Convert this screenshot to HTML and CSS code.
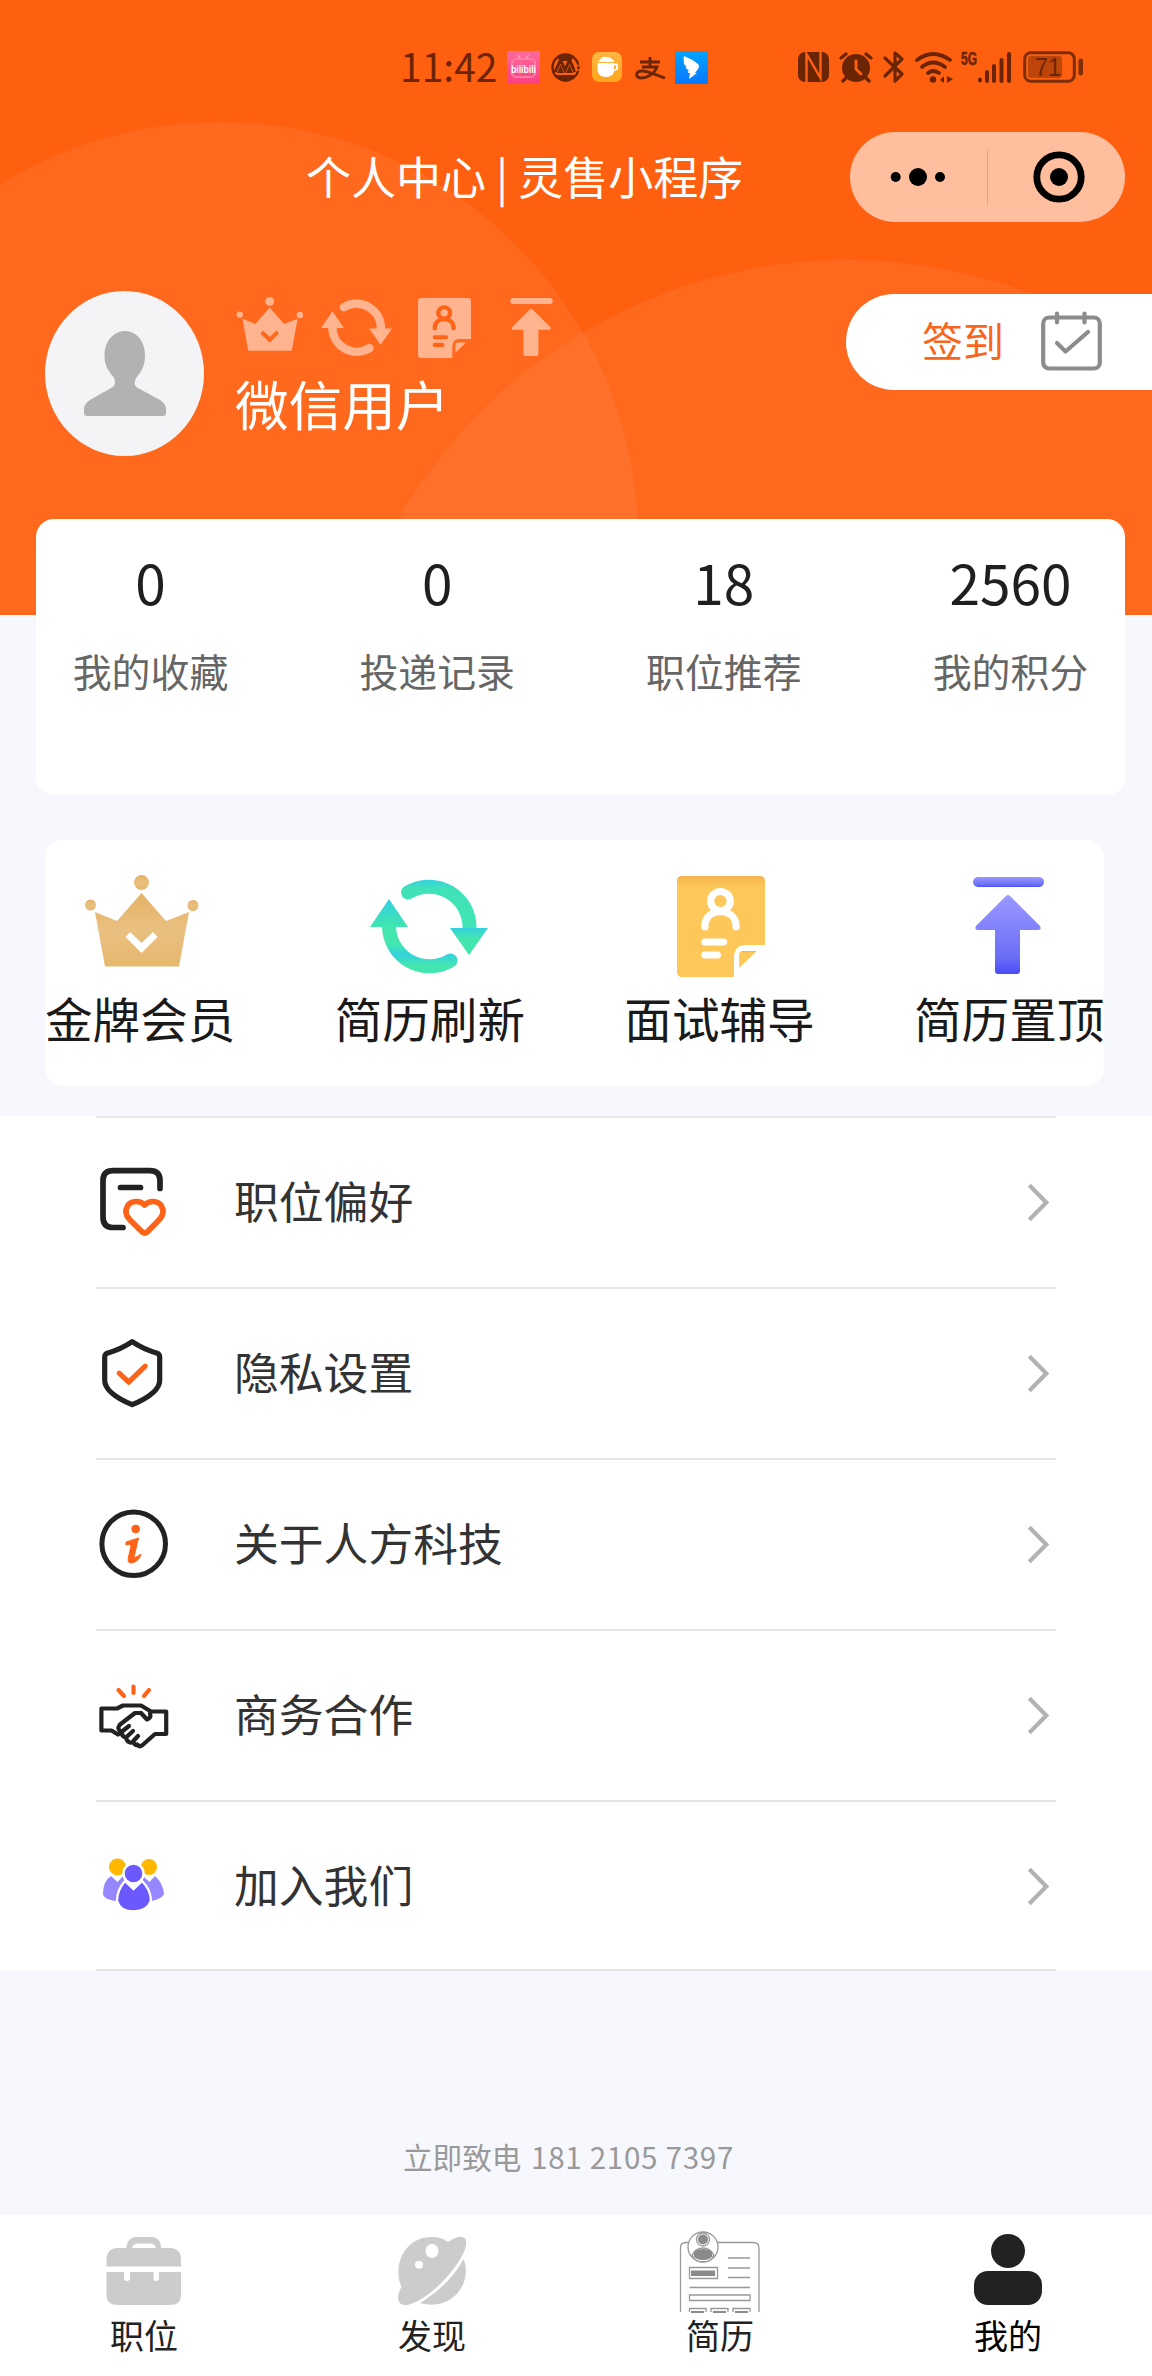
FILE: index.html
```html
<!DOCTYPE html>
<html lang="zh-CN">
<head>
<meta charset="utf-8">
<title>个人中心</title>
<link rel="stylesheet" href="styles.css">
</head>
<body>
<svg class="defs" width="0" height="0" aria-hidden="true">
  <defs>
    <linearGradient id="goldFill" x1="0" y1="0" x2="0" y2="1"><stop offset="0" stop-color="#e3b265"/><stop offset=".5" stop-color="#eac080"/><stop offset="1" stop-color="#e6b86f"/></linearGradient>
    <linearGradient id="mintFill" gradientUnits="userSpaceOnUse" x1="0" y1="0" x2="0" y2="96"><stop offset="0" stop-color="#30cdea"/><stop offset=".22" stop-color="#34d0e0"/><stop offset=".5" stop-color="#42e6ae"/><stop offset=".51" stop-color="#34d0e0"/><stop offset=".62" stop-color="#42e6ae"/></linearGradient>
    <linearGradient id="mintTop" gradientUnits="userSpaceOnUse" x1="0" y1="0" x2="0" y2="96"><stop offset="0" stop-color="#34d0e4"/><stop offset=".1" stop-color="#40e2b8"/><stop offset="1" stop-color="#42e6ae"/></linearGradient>
    <linearGradient id="mintBottom" gradientUnits="userSpaceOnUse" x1="0" y1="0" x2="0" y2="96"><stop offset="0" stop-color="#42e6ae"/><stop offset=".68" stop-color="#42e6ae"/><stop offset=".79" stop-color="#36d2de"/><stop offset=".9" stop-color="#42e6ae"/></linearGradient>
    <linearGradient id="violetFill" x1="0" y1="0" x2="0" y2="1"><stop offset="0" stop-color="#9a99ff"/><stop offset=".8" stop-color="#6b6cf6"/><stop offset="1" stop-color="#474cf8"/></linearGradient>
    <linearGradient id="amberFill" x1="0" y1="0" x2="0" y2="1"><stop offset="0" stop-color="#f3b14e"/><stop offset=".1" stop-color="#fdc75a"/><stop offset="1" stop-color="#fdc75a"/></linearGradient>
    <linearGradient id="pinkFill" x1="0" y1="0" x2="0" y2="1"><stop offset="0" stop-color="#ff6a9c"/><stop offset="1" stop-color="#fd3f80"/></linearGradient>
    <linearGradient id="cupFill" x1="0" y1="0" x2="0" y2="1"><stop offset="0" stop-color="#ffb640"/><stop offset="1" stop-color="#ffa51c"/></linearGradient>
    <linearGradient id="blueFill" x1="0" y1="0" x2="0" y2="1"><stop offset="0" stop-color="#00a3ff"/><stop offset="1" stop-color="#0a78ff"/></linearGradient>
    <symbol id="crown" viewBox="0 0 114 92">
      <circle cx="56.500" cy="7.500" r="7.500"/><circle cx="5.500" cy="30" r="5.500"/><circle cx="108" cy="30.500" r="5.500"/>
      <path fill-rule="evenodd" d="M10 37 32 46 56.500 18 81 46 104 37 94 91.500H20ZM40.500 62 56.500 78 72.500 62 68 57 56.500 68 45 57Z"/>
    </symbol>
    <symbol id="refresh" viewBox="0 0 118 96">
      <path class="arc arc-top" d="M38 13.500A40.500 40.500 0 0 1 99.500 48V54"/>
      <path class="arc arc-bottom" d="M80.500 81.500A40.500 40.500 0 0 1 19 47V40"/>
      <path d="M0 48 19 20 38 48ZM80 49H118L99 76Z"/>
    </symbol>
    <symbol id="note" viewBox="0 0 85 101" preserveAspectRatio="none">
      <path d="M5 0H80Q85 0 85 5V69H67Q55 69 55 82V101H5Q0 101 0 96V5Q0 0 5 0Z"/>
      <path d="M60 92V79Q60 75 64 75H77Z"/>
      <g class="note-line"><circle cx="42" cy="25" r="9.500"/><path d="M27 51V49C28 31 56 31 57 49V51M27 66H45M27 79H39"/></g>
    </symbol>
    <symbol id="totop" viewBox="0 0 71 97">
      <rect x="0" y="0" width="71" height="10" rx="5"/>
      <path d="M33 19Q35 17 37 19L67 49Q69 53 65 53H47V94Q47 97 44 97H25Q22 97 22 94V53H5Q1 53 3 49Z"/>
    </symbol>
  </defs>
</svg>

<header class="hero">
  <svg class="hero-art" width="1152" height="615" viewBox="0 0 1152 615"><circle cx="220" cy="540" r="418"/><circle cx="847" cy="778" r="518"/></svg>

  <div class="status">
    <span class="time">11:42</span>
    <svg class="st-bili" width="33" height="33" viewBox="0 0 33 33"><rect width="33" height="33" fill="url(#pinkFill)"/><path d="M10 4 14 8M22 4 18 8" stroke="#ff8fb4" stroke-width="2"/><rect x="5" y="8" width="23" height="18" rx="4" fill="none" stroke="#ff7da8" stroke-width="2"/><text x="4" y="21.500" class="bili-text" textLength="25" lengthAdjust="spacingAndGlyphs">bilibili</text></svg>
    <svg class="st-bank" width="29" height="29" viewBox="0 0 29 29"><circle cx="14.500" cy="14.500" r="13" fill="none" stroke="#6b2505" stroke-width="2.400"/><path fill="#6b2505" d="M7 5Q14-1 22 5L20 8H9ZM4 22H25Q21 28.500 14.500 28.500T4 22Z"/><path d="M4 19 9.500 7 14 17 18.500 7 24 19" fill="none" stroke="#6b2505" stroke-width="3"/><path fill="#6b2505" d="M6 20 9.500 12 13 20ZM15 20 18.500 12 22 20Z"/><path d="M23 12.500H29M24 17H29" stroke="#ff6010" stroke-width="1.500"/></svg>
    <svg class="st-cup" width="30" height="30" viewBox="0 0 30 30"><rect width="30" height="30" rx="7" fill="url(#cupFill)"/><path fill="#fff" d="M7 9Q10 4 14 5 19 5 22 9V10H5ZM5.500 11H22V18Q22 25 14 25T5.500 18Z"/><path d="M21 12.500H25V17L21 19" fill="none" stroke="#fff" stroke-width="1.800"/></svg>
    <svg class="st-pay" width="31" height="25" viewBox="0 0 31 25"><path d="M5 6H25M15 1V11M7 11H22C19 19 11 22 6 22 0 22 0 15 7 15 13 15 21 19 30 22" fill="none" stroke="#6b2505" stroke-width="2.800"/></svg>
    <svg class="st-ding" width="33" height="33" viewBox="0 0 33 33"><rect width="33" height="33" fill="url(#blueFill)"/><path fill="#fff" d="M9 5Q17 8 23 13 25 15 23 18L20 22H22L14 28 15 22H13Q12 20 14 19 10 18 11 15 8 13 9 11 8 8 9 5Z"/></svg>
    <svg class="st-nfc" width="31" height="30" viewBox="0 0 31 30"><rect width="31" height="30" rx="7" fill="#6b2505"/><path d="M8.500 30V2L22.500 26V0" fill="none" stroke="#ff6010" stroke-width="2.400"/></svg>
    <svg class="st-alarm" width="34" height="30" viewBox="0 0 34 30"><circle cx="17" cy="16" r="14" fill="#6b2505"/><path d="M2 6 7 2M32 6 27 2M7 26 4 29M27 26 30 29" stroke="#6b2505" stroke-width="3.400" stroke-linecap="round"/><path d="M17 9V17L22 22" fill="none" stroke="#ff6010" stroke-width="2.800" stroke-linecap="round"/></svg>
    <svg class="st-bt" width="22" height="34" viewBox="0 0 22 34"><path d="M2 8 19 24 12 31V3L19 9 2 26" fill="none" stroke="#6b2505" stroke-width="3.200" stroke-linejoin="round" stroke-linecap="round"/></svg>
    <svg class="st-wifi" width="38" height="31" viewBox="0 0 38 31"><path d="M2 8Q18-4 35 8M7 15Q18 6 30 15M13 21Q18 17 24 21" fill="none" stroke="#6b2505" stroke-width="3.800" stroke-linecap="round"/><circle cx="18" cy="27.500" r="3.200" fill="#6b2505"/><path fill="#6b2505" d="M29 24V31L25 28ZM32 24V31L38 27Z"/></svg>
    <svg class="st-5g" width="20" height="24" viewBox="0 0 20 24"><text x="2" y="18" class="g-text" textLength="16" lengthAdjust="spacingAndGlyphs">5G</text></svg>
    <svg class="st-signal" width="33" height="31" viewBox="0 0 33 31"><path d="M2 27.500V28.500M9 20V29M16 14V29M23.500 8V29M31 2V29" fill="none" stroke="#6b2505" stroke-width="4" stroke-linecap="round"/></svg>
    <svg class="st-batt" width="61" height="32" viewBox="0 0 61 32"><rect x="1.700" y="1.700" width="49.600" height="28.600" rx="6" fill="none" stroke="#7d2e08" stroke-width="3"/><rect x="5" y="5" width="34" height="22" rx="3" fill="#bd4509"/><rect x="55.500" y="7.500" width="4.500" height="17" rx="2.200" fill="#7d2e08"/><text x="12" y="24.500" class="batt-text" textLength="26" lengthAdjust="spacingAndGlyphs">71</text></svg>
  </div>

  <div class="navbar">
    <h1 class="title">个人中心 | 灵售小程序</h1>
    <div class="capsule">
      <svg width="56" height="20" viewBox="0 0 56 20"><circle cx="5.700" cy="10" r="5"/><circle cx="28" cy="10" r="9"/><circle cx="50" cy="10" r="5"/></svg>
      <i class="capsule-line"></i>
      <svg width="52" height="52" viewBox="0 0 52 52"><circle cx="26" cy="26" r="22.200" fill="none" stroke="#000" stroke-width="6.800"/><circle cx="26" cy="26" r="9"/></svg>
    </div>
  </div>

  <div class="profile">
    <svg class="avatar" width="159" height="165" viewBox="0 0 159 165"><ellipse cx="79.500" cy="82.500" rx="79.500" ry="82.500" fill="#f4f4f6"/><path fill="#b2b2b2" d="M80 40C91 40 100 50 100 64 100 76 96 81 91 87 89 92 89 95 93 97L115 109Q121 113 121 118V122Q121 125 118 125H42Q39 125 39 122V118Q39 113 45 109L66 97C70 95 71 92 69 87 64 80 59.500 76 59.500 64 59.500 50 69 40 80 40Z"/></svg>
    <div class="identity">
      <div class="badges">
        <svg width="70" height="54"><use href="#crown" width="70" height="54"/></svg>
        <svg class="b-refresh" width="71" height="58"><use href="#refresh" width="71" height="58"/></svg>
        <svg class="b-note" width="53" height="60"><use href="#note" width="53" height="60"/></svg>
        <svg class="b-top" width="43" height="58"><use href="#totop" width="43" height="58"/></svg>
      </div>
      <div class="name">微信用户</div>
    </div>
    <div class="signin">
      <span>签到</span>
      <svg width="61" height="61" viewBox="0 0 61 61"><g fill="none" stroke="#8c8c8c" stroke-width="4.200" stroke-linecap="round" stroke-linejoin="round"><rect x="2.200" y="6.500" width="56.600" height="51" rx="6"/><path d="M16 2.500V11.500M43.500 2.500V11.500M16 32 24.500 40.500 47 21"/></g></svg>
    </div>
  </div>
</header>

<section class="stats">
  <div class="stat"><b>0</b><span>我的收藏</span></div>
  <div class="stat"><b>0</b><span>投递记录</span></div>
  <div class="stat"><b>18</b><span>职位推荐</span></div>
  <div class="stat"><b>2560</b><span>我的积分</span></div>
</section>

<section class="services">
  <div class="service"><svg class="s-crown" width="114" height="92"><use href="#crown"/></svg><span>金牌会员</span></div>
  <div class="service"><svg class="s-refresh" width="118" height="96"><use href="#refresh"/></svg><span>简历刷新</span></div>
  <div class="service"><svg class="s-note" width="88" height="101"><use href="#note"/></svg><span>面试辅导</span></div>
  <div class="service"><svg class="s-top" width="71" height="97"><use href="#totop"/></svg><span>简历置顶</span></div>
</section>

<nav class="menu">
  <a class="row">
    <svg class="ico" width="72" height="72" viewBox="0 0 72 72"><g fill="none" stroke-width="5.700" stroke-linecap="round" stroke-linejoin="round"><path stroke="#222" d="M62 21.500V13.500Q62 3.700 52 3.700H15Q5 3.700 5 13.500V50Q5 60.500 15 60.500H25M22.500 20.500H42.500"/><path stroke="#ff6318" d="M46.700 38C42 33 33 33.500 29.800 38.500 26.500 44 28 49 32 53L44.200 65Q46.700 67 49.200 65L61 53C65.500 48.500 66.500 44 63.200 38.500 60 33.500 51 33 46.700 38Z"/></g></svg>
    <span>职位偏好</span>
    <svg class="chev" width="24" height="40" viewBox="0 0 24 40"><path d="M4.300 2.300 21.300 19.500 4.300 36.700"/></svg>
  </a>
  <a class="row">
    <svg class="ico" width="72" height="72" viewBox="0 0 72 72"><g fill="none" stroke-width="5.200" stroke-linecap="round" stroke-linejoin="round" transform="translate(1.200 -.8)"><path stroke="#222" d="M33 4.500C25 10 17 13.500 8 16Q5.500 17 5.500 20V43C5.500 54 20 62 33 67.500 46 62 60.500 54 60.500 43V20Q60.500 17 58 16C49 13.500 41 10 33 4.500Z"/><path stroke="#ff6318" d="M20 36 29.500 45 46 29"/></g></svg>
    <span>隐私设置</span>
    <svg class="chev" width="24" height="40" viewBox="0 0 24 40"><path d="M4.300 2.300 21.300 19.500 4.300 36.700"/></svg>
  </a>
  <a class="row">
    <svg class="ico" width="72" height="72" viewBox="0 0 72 72"><circle cx="35.700" cy="34.800" r="31.800" fill="none" stroke="#222" stroke-width="5"/><g fill="#ff6318" stroke="#ff6318" stroke-width="1" stroke-linejoin="round"><circle cx="37.700" cy="20" r="3.900"/><path d="M28 33 40.500 29 36 48Q36 50 43 45 41 53 33 54 29 54 30.500 48L33 37Q33 34.500 28 36Z"/></g></svg>
    <span>关于人方科技</span>
    <svg class="chev" width="24" height="40" viewBox="0 0 24 40"><path d="M4.300 2.300 21.300 19.500 4.300 36.700"/></svg>
  </a>
  <a class="row">
    <svg class="ico" width="72" height="72" viewBox="0 0 72 72"><g fill="none" stroke-width="4.200" stroke-linecap="round" stroke-linejoin="round"><path stroke="#ff6318" d="M20.500 10 26 16M35.500 6.500V13M51 10 46 16"/><path stroke="#222" d="M3.400 28.500H19L25 25.500H43L53 31.500H68.200V54H57L44 65.500Q41 67.500 39 64.500M43 33H37L22 44.500Q18 49.500 24 51.500L31 46M43 33 49 39.500Q53.500 38 52 33.500M24 51.500 20 54.500 13.500 50.500H3.400V28.500M24 51.500Q23 56.500 28 57.500L35 51M28 57.500C29 62.500 33 63.500 35 61.500L40 56M35 61.500Q36 65.500 41 65.500"/></g></svg>
    <span>商务合作</span>
    <svg class="chev" width="24" height="40" viewBox="0 0 24 40"><path d="M4.300 2.300 21.300 19.500 4.300 36.700"/></svg>
  </a>
  <a class="row">
    <svg class="ico" width="72" height="72" viewBox="0 0 72 72"><g transform="translate(0 -2)"><g fill="#ffb800"><circle cx="19.500" cy="18" r="8.500"/><circle cx="51" cy="18" r="8"/></g><path fill="#9787fe" d="M13 27 19.500 33 25 27Q31 30 31 52H17Q5 50 5 45 5 32 13 27ZM45 27 51.500 33 57 27Q65 34 66 45 65 49 54 52H41Z"/><g fill="#6c59fd" stroke="#fff" stroke-width="2.400"><path d="M27 32 35.500 40 44 32Q53 41 53 52 49 62.500 35.500 62.500T19 52Q19 41 27 32Z"/><circle cx="35.500" cy="24.500" r="10"/></g></g></svg>
    <span>加入我们</span>
    <svg class="chev" width="24" height="40" viewBox="0 0 24 40"><path d="M4.300 2.300 21.300 19.500 4.300 36.700"/></svg>
  </a>
</nav>

<p class="hotline">立即致电 <span>181 2105 7397</span></p>

<footer class="tabbar">
  <div class="tab"><svg width="82" height="82" viewBox="0 0 82 82"><g fill="#ccc"><path d="M3.500 35.500V29Q3.500 17 15 17H23.500V15Q25 6 34 6H48Q57 6 58 15V17H67Q78 17 78 29V35.500ZM29 17H53Q52 12.500 47 12.500H35Q30 12.500 29 17Z" fill-rule="evenodd"/><path d="M3.500 41H21V48.500Q24 52 27 48.500V41H50.500V48.500Q53.500 52 56 48.500V41H78V64Q78 74 67 74H15Q3.500 74 3.500 64Z"/></g></svg><span>职位</span></div>
  <div class="tab"><svg width="82" height="82" viewBox="0 0 82 82"><path fill="#ccc" fill-rule="evenodd" d="M57 11C65 6 71 4 74.500 8 79 18 62 42 44 58 31 69 17 77 10 73 5 69 7 62 10.500 56 2 38 11 6 41 6 48 6 53 8 57 11ZM41 13A6.500 7 0 1 0 41 27 6.500 7 0 1 0 41 13ZM28 30A3.500 3.800 0 1 0 28 37.500 3.500 3.800 0 1 0 28 30ZM72.500 28C82 51 62 81 29 72 47 61 63 46 72.500 28Z"/></svg><span>发现</span></div>
  <div class="tab"><svg width="82" height="82" viewBox="0 0 82 82"><g fill="none" stroke="#999" stroke-width="1.300"><path d="M1.500 81V17Q1.500 11.500 7 11.500H74Q80 11.500 80 17V81"/><circle cx="24" cy="16" r="15" fill="#fff"/><circle cx="24" cy="8.500" r="6.500"/><path d="M13 24Q17 17 24 17T35 24Q32 31 24 31T13 24ZM10.500 36.500H38.500V47.500H10.500ZM49 27H71M49 37H71M49 46.500H71M10.500 56.500H71M10.500 64H71V69.500H10.500ZM10.500 81V77.500H27V81M32 81V77.500H49V81M54 81V77.500H71V81"/></g><g fill="#8a8a8a"><circle cx="24" cy="8.500" r="5"/><ellipse cx="24" cy="23.500" rx="9.500" ry="5.500"/><path d="M12 39.500H36V45H12ZM12 80H25V82H12ZM34 80H47V82H34ZM56 80H69V82H56Z"/></g></svg><span>简历</span></div>
  <div class="tab active"><svg width="82" height="82" viewBox="0 0 82 82"><g fill="#222"><ellipse cx="41" cy="20" rx="17" ry="17"/><rect x="7" y="40" width="68" height="34" rx="14"/></g></svg><span>我的</span></div>
</footer>
</body>
</html>
```

FILE: styles.css
```css
* { box-sizing: border-box; }
body {
  margin: 0;
  width: 1152px;
  min-height: 2376px;
  display: flex;
  flex-direction: column;
  background: #f7f8fd;
  color: #222;
  font-family: "Noto Sans CJK SC", "Noto Sans", sans-serif;
}
svg { display: block; flex: none; overflow: visible; }
.defs { position: absolute; }

/* orange header */
.hero {
  position: relative;
  height: 615px;
  background: #ff6010;
  overflow: hidden;
}
.hero-art { position: absolute; inset: 0; fill: #fff; fill-opacity: .06; }
.status, .navbar, .profile { position: relative; display: flex; }

.status { height: 132px; padding: 51px 0 0 400px; align-items: flex-start; color: #6b2505; }
.time { width: 107px; height: 33px; font-size: 39px; line-height: 29px; white-space: nowrap; }
.st-bank { margin: 2px 0 0 11px; }
.st-cup { margin: 1px 0 0 12px; }
.st-pay { margin: 5px 0 0 13px; }
.st-ding { margin-left: 9px; }
.st-nfc { margin: 1px 0 0 90px; }
.st-alarm { margin: 1px 0 0 10px; }
.st-bt { margin: -1px 0 0 10px; }
.st-wifi { margin: 1px 0 0 10px; }
.st-5g { margin: -4px 0 0 6px; }
.st-signal { margin: 1px 0 0 -1px; }
.st-batt { margin-left: 12px; }
.bili-text { font: bold 11px "Liberation Sans", sans-serif; fill: #fff; }
.g-text { font: bold 18px "Liberation Sans", sans-serif; fill: #6b2505; stroke: #6b2505; stroke-width: .5; }
.batt-text { font: 25px/1 "Liberation Sans", sans-serif; fill: #6b2505; }

.navbar { height: 90px; padding: 0 27px 0 306px; justify-content: space-between; align-items: center; }
.title { margin: -2px 0 0; color: #fff; font-size: 45px; font-weight: 400; line-height: 90px; white-space: nowrap; }
.capsule {
  display: flex;
  align-items: center;
  width: 275px;
  height: 90px;
  padding: 0 40px;
  border-radius: 45px;
  background: #ffbf9f;
}
.capsule-line { width: 1px; height: 55px; margin: 0 45px 0 41px; background: #e3a385; }

.profile { height: 233px; padding: 69px 0 0 45px; align-items: flex-start; }
.identity { margin-left: 31px; }
.badges { display: flex; height: 62px; padding-top: 6px; fill: #fff; opacity: .5; --arc-top: #fff; --arc-bottom: #fff; --line: #ff6010; }
.arc { fill: none; stroke-width: 14; stroke-linecap: round; }
.arc-top { stroke: var(--arc-top); }
.arc-bottom { stroke: var(--arc-bottom); }
.note-line { fill: none; stroke: var(--line); stroke-width: 7; stroke-linecap: round; }
.b-refresh { margin: 2px 0 0 16px; }
.b-note { margin: 1px 0 0 26px; }
.b-top { margin: 1px 0 0 39px; }
.name { margin-top: 11px; color: #fff; font-size: 53.6px; line-height: 78px; }
.signin {
  display: flex;
  align-items: center;
  justify-content: space-between;
  width: 306px;
  height: 96px;
  margin: 3px 0 0 auto;
  padding: 0 50px 2px 76px;
  border-radius: 48px 0 0 48px;
  background: #fff;
  color: #fa651c;
  font-size: 41px;
}
.signin span { margin-top: -4px; }

/* counters */
.stats {
  position: relative;
  display: flex;
  justify-content: space-between;
  width: 1089px;
  height: 276px;
  margin: -96px 0 0 36px;
  padding: 0 37px;
  border-radius: 18px;
  background: #fff;
}
.stat { display: flex; flex-direction: column; align-items: center; width: 155px; }
.stat b { margin-top: 22px; color: #1f1f1f; font-size: 55px; font-weight: 400; line-height: 80px; }
.stat span { margin-top: 20px; color: #666; font-size: 38.9px; line-height: 58px; white-space: nowrap; }

/* paid services */
.services {
  display: flex;
  justify-content: space-between;
  width: 1059px;
  height: 246px;
  margin: 45px 0 0 45px;
  border-radius: 18px;
  background: #fff;
}
.service {
  display: grid;
  grid-template-rows: 143px 70px;
  justify-items: center;
  align-items: start;
  width: 190px;
}
.service span { color: #1a1a1a; font-size: 47.6px; line-height: 70px; white-space: nowrap; }
.s-crown { margin: 35px 0 0 3px; fill: url(#goldFill); }
.s-refresh { margin: 39px 0 0 -1px; fill: url(#mintFill); --arc-top: url(#mintTop); --arc-bottom: url(#mintBottom); }
.s-note { margin: 36px 0 0 2px; fill: url(#amberFill); --line: #fff; }
.s-top { margin: 37px 0 0 -1px; fill: url(#violetFill); }

/* menu list */
.menu { height: 855px; margin-top: 30px; padding: 0 96px; background: #fff; }
.row { display: flex; align-items: center; height: 171px; border-top: 2px solid #e5e5e5; }
.row:last-child { padding-top: 2px; border-bottom: 2px solid #e5e5e5; }
.row span { margin: -6px 0 0 64px; color: #333; font-size: 44.8px; line-height: 66px; }
.ico { margin-left: 2px; }
.chev { margin: 0 7px 0 auto; fill: none; stroke: #b2b2b2; stroke-width: 4.2; }

.hotline { margin: 164px 0 0 403px; color: #999; font-size: 29.6px; line-height: 44px; white-space: nowrap; }
.hotline span { margin-left: 3px; letter-spacing: .7px; }

/* bottom tabs */
.tabbar { display: grid; grid-template-columns: repeat(4, 1fr); height: 161px; margin-top: auto; background: #fff; }
.tab { display: flex; flex-direction: column; align-items: center; padding-top: 16px; }
.tab span { color: #222; font-size: 34px; line-height: 50px; margin-top: -3px; }
.tab.active span { color: #000; }
```
